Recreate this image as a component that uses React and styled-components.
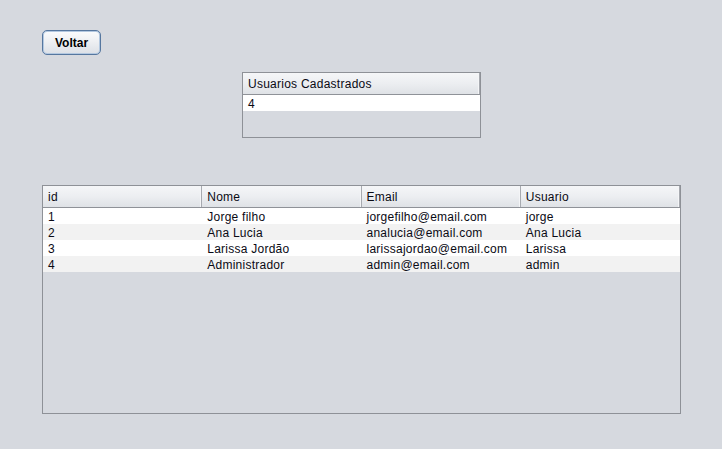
import React from "react";
import styled, { createGlobalStyle } from "styled-components";

const Global = createGlobalStyle`
  html, body { margin: 0; padding: 0; background: #d6d9df; }
  body { font-family: "Liberation Sans", Arial, sans-serif; color: #000; }
`;

const Page = styled.div`
  width: 722px;
  height: 449px;
  box-sizing: border-box;
  padding: 30px 0 0 42px;
  display: flex;
  flex-direction: column;
  align-items: flex-start;
`;

const Button = styled.button`
  width: 59px;
  height: 25px;
  box-sizing: border-box;
  border: 1px solid #56779f;
  border-radius: 5px;
  box-shadow: inset 0 0 0 1px #b3c8e0;
  background: linear-gradient(#fbfcfd 0%, #eef0f3 45%, #dce0e6 100%);
  font-family: "Liberation Sans", Arial, sans-serif;
  font-weight: bold;
  font-size: 12px;
  color: #000;
  padding: 0;
  line-height: 24px;
  cursor: pointer;
`;

const Table = styled.div`
  box-sizing: border-box;
  width: ${(p) => p.$w}px;
  height: ${(p) => p.$h}px;
  margin-top: ${(p) => p.$top}px;
  margin-left: ${(p) => p.$left}px;
  border: 1px solid #8e9197;
  display: flex;
  flex-direction: column;
  background: #d6d9df;
  font-size: 12px;
  letter-spacing: 0.25px;
`;

const HeaderRow = styled.div`
  display: grid;
  grid-template-columns: repeat(${(p) => p.$cols}, 1fr);
  height: 22px;
  box-sizing: border-box;
  border-bottom: 1px solid #8f9298;
  background: linear-gradient(#f5f6f8 0%, #eceef1 50%, #dfe2e6 100%);
`;

const HeaderCell = styled.div`
  height: 21px;
  line-height: 23px;
  padding-left: 5px;
  border-right: 1px solid #a7aab0;
  box-shadow: inset -1px 0 0 #f4f5f7;
  white-space: nowrap;
  overflow: hidden;
  color: #0a0a14;
`;

const Row = styled.div`
  display: grid;
  grid-template-columns: repeat(${(p) => p.$cols}, 1fr);
  height: 16px;
  background: ${(p) => (p.$alt ? "#f2f2f2" : "#ffffff")};
`;

const Cell = styled.div`
  height: 16px;
  line-height: 18px;
  padding-left: 5px;
  white-space: nowrap;
  overflow: hidden;
  color: #0a0a14;
`;

const users = [
  ["1", "Jorge filho", "jorgefilho@email.com", "jorge"],
  ["2", "Ana Lucia", "analucia@email.com", "Ana Lucia"],
  ["3", "Larissa Jordão", "larissajordao@email.com", "Larissa"],
  ["4", "Administrador", "admin@email.com", "admin"],
];

export default function App() {
  return (
    <>
      <Global />
      <Page>
        <Button>Voltar</Button>
        <Table $w={239} $h={66} $top={17} $left={200}>
          <HeaderRow $cols={1}>
            <HeaderCell>Usuarios Cadastrados</HeaderCell>
          </HeaderRow>
          <Row $cols={1}>
            <Cell>4</Cell>
          </Row>
        </Table>
        <Table $w={639} $h={229} $top={47} $left={0}>
          <HeaderRow $cols={4}>
            <HeaderCell>id</HeaderCell>
            <HeaderCell>Nome</HeaderCell>
            <HeaderCell>Email</HeaderCell>
            <HeaderCell>Usuario</HeaderCell>
          </HeaderRow>
          {users.map((u, i) => (
            <Row key={u[0]} $cols={4} $alt={i % 2 === 1}>
              {u.map((v, j) => (
                <Cell key={j}>{v}</Cell>
              ))}
            </Row>
          ))}
        </Table>
      </Page>
    </>
  );
}
